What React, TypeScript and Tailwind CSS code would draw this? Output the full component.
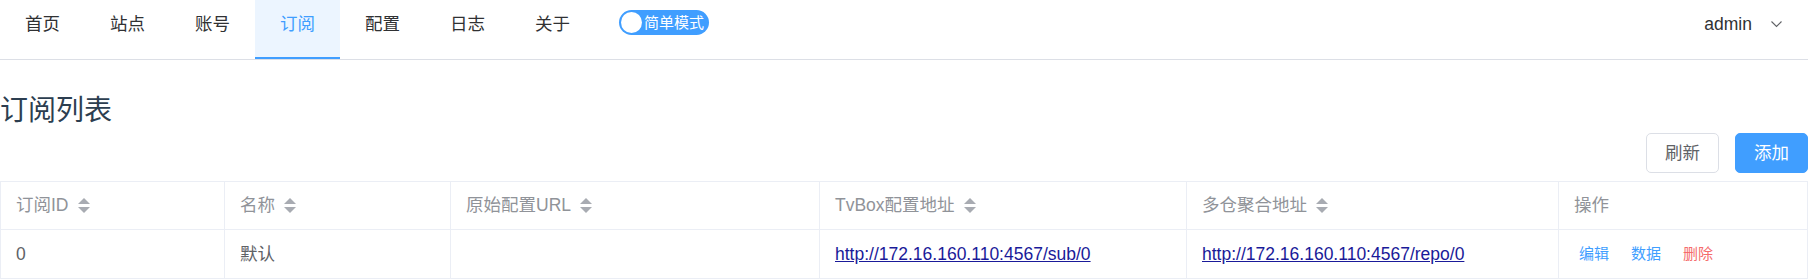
import React from 'react'

const navItems = ['首页', '站点', '账号', '订阅', '配置', '日志', '关于']

const columns = [
  { title: '订阅ID', sortable: true },
  { title: '名称', sortable: true },
  { title: '原始配置URL', sortable: true },
  { title: 'TvBox配置地址', sortable: true },
  { title: '多仓聚合地址', sortable: true },
  { title: '操作', sortable: false },
]

function SortCaret() {
  return (
    <svg width="12" height="15" viewBox="0 0 12 15" className="shrink-0">
      <polygon points="6,0 12,6 0,6" fill="#a8abb2" />
      <polygon points="0,9 12,9 6,15" fill="#a8abb2" />
    </svg>
  )
}

function Chevron() {
  return (
    <svg width="11" height="7" viewBox="0 0 11 7" className="shrink-0">
      <polyline points="0.5,0.5 5.5,5.5 10.5,0.5" fill="none" stroke="#606266" strokeWidth="1.1" />
    </svg>
  )
}

export default function App() {
  const active = '订阅'

  return (
    <div className="w-[1808px] bg-white font-['Liberation_Sans','Noto_Sans_CJK_SC',sans-serif]">
      {/* Top menu */}
      <div className="flex h-[60px] items-start border-b border-[#dcdfe6]">
        {navItems.map((item) => (
          <div
            key={item}
            className={`flex h-[59px] w-[85px] justify-center pt-[12px] text-[17.5px] leading-[24px] ${
              item === active
                ? 'border-b-2 border-[#409eff] bg-[#ecf5ff] text-[#409eff]'
                : 'text-[#303133]'
            }`}
          >
            {item}
          </div>
        ))}
        <div className="ml-[24px] mt-[10px] flex h-[25px] w-[90px] items-center gap-[2px] rounded-full bg-[#409eff] pl-[2px]">
          <div className="h-[21px] w-[21px] rounded-full bg-white" />
          <span className="text-[15px] leading-none text-white">简单模式</span>
        </div>
        <div className="ml-auto flex items-center gap-[19px] pr-[26px] pt-[12px] text-[17.5px] leading-[24px] text-[#303133]">
          <span>admin</span>
          <Chevron />
        </div>
      </div>

      {/* Page body */}
      <h2 className="mt-[31px] text-[28px] font-normal leading-[40px] text-[#2c3e50]">订阅列表</h2>

      <div className="mt-[2px] flex justify-end gap-[16px]">
        <button className="h-[40px] rounded-[5px] border border-[#dcdfe6] bg-white px-[18px] text-[17.5px] text-[#606266]">
          刷新
        </button>
        <button className="h-[40px] rounded-[5px] border border-[#409eff] bg-[#409eff] px-[18px] text-[17.5px] text-white">
          添加
        </button>
      </div>

      <div className="mt-[8px] border-l border-t border-[#ebeef5]">
        <div className="grid h-[48px] grid-cols-[224px_226px_369px_367px_372px_1fr] border-b border-[#ebeef5]">
          {columns.map((col) => (
            <div
              key={col.title}
              className="flex items-center gap-[9px] border-r border-[#ebeef5] px-[15px] text-[17.5px] text-[#909399]"
            >
              <span>{col.title}</span>
              {col.sortable && <SortCaret />}
            </div>
          ))}
        </div>
        <div className="grid h-[49px] grid-cols-[224px_226px_369px_367px_372px_1fr] border-b border-[#ebeef5] text-[17.5px] text-[#606266]">
          <div className="flex items-center border-r border-[#ebeef5] px-[15px]">0</div>
          <div className="flex items-center border-r border-[#ebeef5] px-[15px]">默认</div>
          <div className="flex items-center border-r border-[#ebeef5] px-[15px]"></div>
          <div className="flex items-center border-r border-[#ebeef5] px-[15px]">
            <a href="#" className="text-[#1a1a99] underline">http://172.16.160.110:4567/sub/0</a>
          </div>
          <div className="flex items-center border-r border-[#ebeef5] px-[15px]">
            <a href="#" className="text-[#1a1a99] underline">http://172.16.160.110:4567/repo/0</a>
          </div>
          <div className="flex items-center gap-[22px] border-r border-[#ebeef5] px-[20px] text-[15px]">
            <span className="text-[#409eff]">编辑</span>
            <span className="text-[#409eff]">数据</span>
            <span className="text-[#f56c6c]">删除</span>
          </div>
        </div>
      </div>
    </div>
  )
}
